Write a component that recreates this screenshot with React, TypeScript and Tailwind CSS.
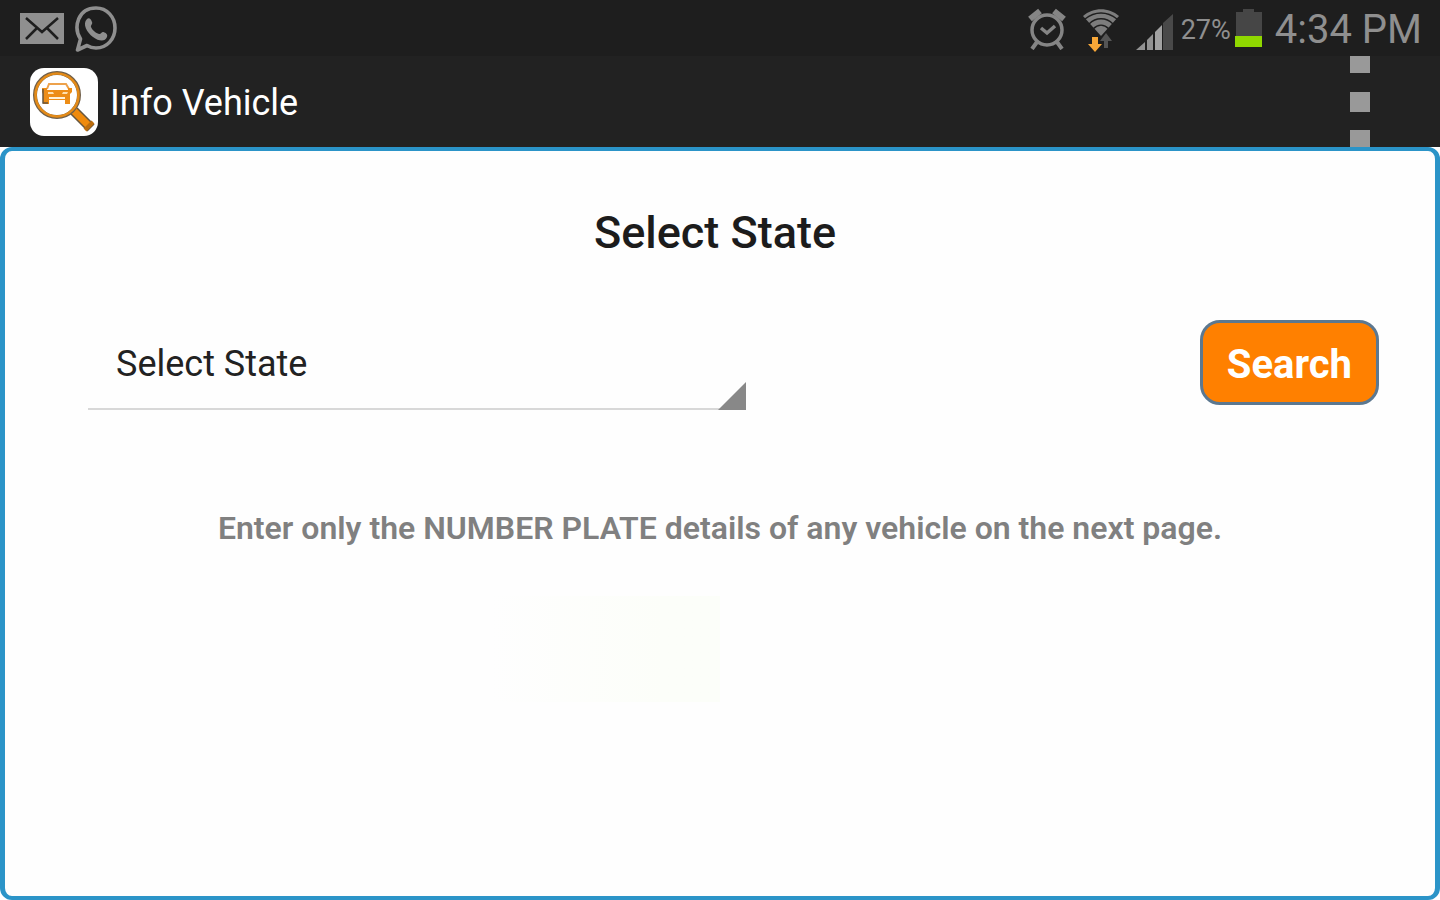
import { useState } from 'react'

const STATES = ['Select State', 'Delhi', 'Gujarat', 'Karnataka', 'Maharashtra', 'Tamil Nadu']

function MailIcon() {
  return (
    <svg className="w-11 h-8" viewBox="0 0 44 32" aria-hidden="true">
      <rect y="1" width="44" height="31" fill="#8f8f8f" />
      <path d="M6 6L22 20L38 6M6 27L17 16M38 27L27 16" fill="none" stroke="#1e1e1e" strokeWidth={2.500} />
    </svg>
  )
}

function ChatIcon() {
  return (
    <svg className="w-11 h-12" viewBox="0 0 44 48" aria-hidden="true">
      <path
        d="M3.500 46L6.500 35C-1 23 4 4 22 4C33 4 41 13 41 24C41 35 33 44 22 44C18.500 44 15.500 43 13 41.500Z"
        fill="none"
        stroke="#8f8f8f"
        strokeWidth={3.600}
        strokeLinejoin="round"
      />
      <path
        d="M13 15C15 13 17 15 18 18C19 20 16.500 21 17 23C18 26 22 29 25 30C27 30.500 27.500 27.500 29.500 28C32 29 34 30.500 33 33C31 38 25 37.500 19 33C13 28.500 8 20 13 15Z"
        fill="#8f8f8f"
      />
    </svg>
  )
}

function AlarmIcon() {
  return (
    <svg className="w-10 h-11" viewBox="0 0 40 44" fill="none" stroke="#858585" aria-hidden="true">
      <circle cx="20" cy="24" r="15" strokeWidth={3.500} />
      <path d="M3 13L13 5M27 5L37 13" strokeWidth={6} />
      <path d="M10 36L5 43M30 36L35 43" strokeWidth={4} />
      <path d="M14 22L20 27L28 20" strokeWidth={3.500} />
    </svg>
  )
}

function WifiIcon() {
  return (
    <svg className="w-10 h-12" viewBox="0 0 40 48" fill="none" aria-hidden="true">
      <path d="M2 12C12 3 28 3 38 12L20 32Z" fill="#7d7d7d" />
      <path d="M4 15C14 7 26 7 36 15M8 20C15 13 25 13 32 20M12 25C17 20 23 20 28 25" stroke="#1e1e1e" strokeWidth={1.500} />
      <path d="M23 44V37H19L25 29L31 37H27V44Z" fill="#555555" />
      <path d="M11 33H17V40H21L14 48L7 40H11Z" fill="#f9a838" />
    </svg>
  )
}

function SignalIcon() {
  return (
    <svg className="w-10 h-10" viewBox="0 0 40 40" aria-hidden="true">
      <path d="M1 38L10 30V38Z" fill="#929292" />
      <path d="M12 28L18 22V38H12Z" fill="#929292" />
      <path d="M20 20L27 13V38H20Z" fill="#a2a2a2" />
      <path d="M28 11L38 2V38H28Z" fill="#494949" />
    </svg>
  )
}

function BatteryIcon() {
  return (
    <svg className="w-7 h-10" viewBox="0 0 28 40" aria-hidden="true">
      <path d="M1 4H8V1H19V4H27V28H1Z" fill="#464646" />
      <rect x="0" y="28" width="27" height="11" fill="#90d800" />
    </svg>
  )
}

function AppLogo() {
  return (
    <svg className="w-17 h-17" viewBox="0 0 68 68" aria-hidden="true">
      <rect width="68" height="68" rx="14" fill="#ffffff" />
      <path d="M44 43L61 60" stroke="#66563f" strokeWidth={10} />
      <path d="M44 43L60 59" stroke="#ef8a0c" strokeWidth={7} />
      <path d="M63 54L55 62" stroke="#bd6d0d" strokeWidth={4} />
      <circle cx="27" cy="27" r="22" fill="#ffffff" stroke="#705f49" strokeWidth={4} />
      <circle cx="27" cy="27" r="21.500" fill="none" stroke="#e48b18" strokeWidth={2.600} />
      <path d="M17 21L19 16H36L39 21" fill="none" stroke="#eda24c" strokeWidth={2} />
      <path d="M12 20H17V22H38V20H42V24L40 26V36H35V32H19V36H13V26L12 24Z" fill="#ed8d17" />
      <path d="M18 24H23L24 26H18ZM33 24H38L37 26H32Z" fill="#ffe0ae" />
      <path d="M19 30H35" stroke="#fff2da" strokeWidth={2} />
      <path d="M13 21V35H18" fill="none" stroke="#66563f" strokeWidth={1.500} />
    </svg>
  )
}

function StatusBar() {
  return (
    <div className="flex h-14 items-center justify-between bg-[#1e1e1e] pl-5 pr-[18px] text-[#8f8f8f]">
      <div className="flex items-center gap-2.5">
        <MailIcon />
        <ChatIcon />
      </div>
      <div className="flex items-center">
        <AlarmIcon />
        <div className="flex items-center pl-3.5">
          <WifiIcon />
        </div>
        <div className="flex items-center pl-3.5 pt-2">
          <SignalIcon />
        </div>
        <span className="pl-1.5 pt-1 text-[27px]">27%</span>
        <div className="flex items-center pl-1 pr-3">
          <BatteryIcon />
        </div>
        <span className="pt-1 text-[40px] leading-none">4:34 PM</span>
      </div>
    </div>
  )
}

function ActionBar() {
  return (
    <header className="flex h-[91px] items-center justify-between bg-[#222222] pl-[30px] pr-[70px]">
      <div className="flex items-center gap-3">
        <AppLogo />
        <h1 className="pt-0.5 text-[36px] leading-none text-white">Info Vehicle</h1>
      </div>
      <button type="button" aria-label="More options" className="flex h-full flex-col justify-between">
        <span className="h-[17px] w-5 bg-[#999999]"></span>
        <span className="h-5 w-5 bg-[#999999]"></span>
        <span className="h-[17px] w-5 bg-[#999999]"></span>
      </button>
    </header>
  )
}

export default function App() {
  const [state, setState] = useState(STATES[0])

  return (
    <div className="flex min-h-screen flex-col bg-white font-[Roboto,sans-serif]">
      <StatusBar />
      <ActionBar />

      <main className="flex flex-1 flex-col rounded-xl border-x-[5px] border-y-4 border-[#2b94c8] bg-[#fefefe]">
        <h2 className="pr-2.5 pt-[54px] text-center text-[45px] font-medium leading-[56px] text-[#1c1c1c]">
          Select State
        </h2>

        <form
          className="flex items-start justify-between pl-[83px] pr-14 pt-[59px]"
          onSubmit={(e) => e.preventDefault()}
        >
          <div className="relative w-[51%]">
            <select
              aria-label="State"
              value={state}
              onChange={(e) => setState(e.target.value)}
              className="h-[90px] w-full appearance-none border-b-2 border-[#d8d8d8] bg-transparent pl-7 text-[36px] text-[#222222]"
            >
              {STATES.map((name) => (
                <option key={name}>{name}</option>
              ))}
            </select>
            <svg className="pointer-events-none absolute bottom-0 right-0 h-7 w-7" viewBox="0 0 28 28" aria-hidden="true">
              <path d="M28 0V28H0Z" fill="#888888" />
            </svg>
          </div>

          <button
            type="submit"
            className="h-[85px] rounded-[20px] border-[3px] border-[#5c7890] bg-[#ff8000] px-6 pt-1 text-[40px] font-bold text-white"
          >
            Search
          </button>
        </form>

        <p className="pt-[98px] text-center text-[32px] font-semibold leading-10 text-[#808080]">
          Enter only the NUMBER PLATE details of any vehicle on the next page.
        </p>

        <div className="ml-[10%] mt-12 h-[106px] w-[40%] bg-linear-to-r from-[#fefefe] from-60% to-[#fcfef9] to-90%"></div>
      </main>
    </div>
  )
}
